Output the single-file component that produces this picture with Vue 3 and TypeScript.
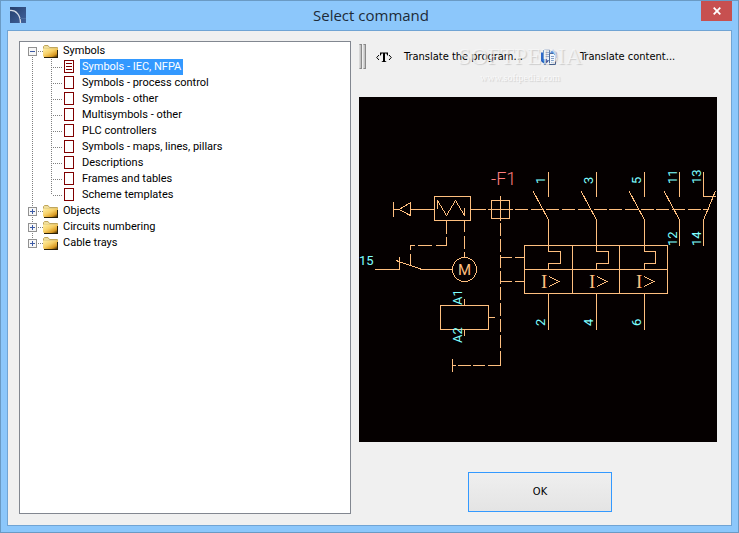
<script setup lang="ts">
import { ref } from 'vue'

interface TreeGroup {
  label: string
  open: boolean
  children: string[]
}

const groups = ref<TreeGroup[]>([
  {
    label: 'Symbols',
    open: true,
    children: [
      'Symbols - IEC, NFPA',
      'Symbols - process control',
      'Symbols - other',
      'Multisymbols - other',
      'PLC controllers',
      'Symbols - maps, lines, pillars',
      'Descriptions',
      'Frames and tables',
      'Scheme templates',
    ],
  },
  { label: 'Objects', open: false, children: [] },
  { label: 'Circuits numbering', open: false, children: [] },
  { label: 'Cable trays', open: false, children: [] },
])

const selected = ref('Symbols - IEC, NFPA')

interface Pole {
  x: number
  inner: number
  top: string
  bottom: string
}

const poles: Pole[] = [
  { x: 548, inner: 560, top: '1', bottom: '2' },
  { x: 596, inner: 608, top: '3', bottom: '4' },
  { x: 644, inner: 655, top: '5', bottom: '6' },
]

interface Tag {
  x: number
  y: number
  text: string
}

const tags: Tag[] = [
  ...poles.map((p) => ({ x: p.x - 3, y: 184, text: p.top })),
  ...poles.map((p) => ({ x: p.x - 3, y: 326, text: p.bottom })),
  { x: 677, y: 184, text: '11' },
  { x: 701, y: 184, text: '13' },
  { x: 677, y: 246, text: '12' },
  { x: 701, y: 246, text: '14' },
  { x: 462, y: 305, text: 'A1' },
  { x: 462, y: 343, text: 'A2' },
]
</script>

<template>
  <div class="window">
    <header class="titlebar">
      <svg class="app-icon" width="16" height="16" viewBox="0 0 16 16" aria-hidden="true">
        <defs>
          <linearGradient id="appbg" x1="0" y1="0" x2="1" y2="1">
            <stop offset="0" stop-color="#253f6c" />
            <stop offset="1" stop-color="#42639c" />
          </linearGradient>
        </defs>
        <rect width="16" height="16" fill="url(#appbg)" />
        <path d="M0 3.500C6 3 10.500 8 10.500 16" fill="none" stroke="#d5dce6" stroke-width="1.300" />
        <path d="M10 11.500h6" stroke="#4f6f9f" stroke-width="1" />
      </svg>
      <h1 class="title">Select command</h1>
      <button class="close" type="button" aria-label="Close">
        <svg width="8" height="8" viewBox="0 0 8 8" aria-hidden="true">
          <path d="M0.700 0.700L7.300 7.300M7.300 0.700L0.700 7.300" stroke="#fff" stroke-width="1.800" />
        </svg>
      </button>
    </header>

    <main class="client">
      <ul class="tree" role="tree">
        <li v-for="(group, g) in groups" :key="group.label" role="none">
          <button
            class="row root"
            type="button"
            role="treeitem"
            :aria-expanded="group.open"
            @click="group.open = !group.open"
          >
            <svg width="15" height="16" viewBox="0 0 15 16" shape-rendering="crispEdges" aria-hidden="true">
              <path v-if="g > 0" class="dots" d="M4.500 0V4" />
              <path v-if="g < groups.length - 1" class="dots" d="M4.500 14V16" />
              <path class="dots" d="M10 8.500H15" />
              <rect x="0.500" y="4.500" width="8" height="8" fill="#f7f7f7" stroke="#919191" />
              <path d="M2 8.500H7" stroke="#3c5aa5" />
              <path v-if="!group.open" d="M4.500 6V11" stroke="#3c5aa5" />
            </svg>
            <svg class="folder" width="16" height="16" viewBox="0 0 16 16" aria-hidden="true">
              <defs>
                <linearGradient :id="`folder${g}`" x1="0" y1="0" x2="1" y2="1">
                  <stop offset="0" stop-color="#fff0a8" />
                  <stop offset="0.450" stop-color="#f6cf66" />
                  <stop offset="0.750" stop-color="#d99a22" />
                  <stop offset="1" stop-color="#2e1c00" />
                </linearGradient>
              </defs>
              <path d="M0.500 5V3.500L1.500 2.500H5L6.500 4.500H14.500V6H0.500Z" fill="#efdd9b" stroke="#c0a65c" />
              <path d="M0 5.500H15V14H1L0 13Z" :fill="`url(#folder${g})`" />
              <path d="M1 14.500H15M14.500 14V7" fill="none" stroke="#2b2109" />
            </svg>
            <span class="text">{{ group.label }}</span>
          </button>
          <ul v-if="group.open" class="children" role="group">
            <li v-for="(child, i) in group.children" :key="child" role="none">
              <button
                class="row leaf"
                type="button"
                role="treeitem"
                :aria-selected="child === selected"
                @click="selected = child"
              >
                <svg width="34" height="16" viewBox="0 0 34 16" shape-rendering="crispEdges" aria-hidden="true">
                  <path class="dots" d="M4.500 0V16" />
                  <path class="dots" :d="i === group.children.length - 1 ? 'M23.500 0V8' : 'M23.500 0V16'" />
                  <path class="dots" d="M25 8.500H34" />
                </svg>
                <svg class="page" width="11" height="16" viewBox="0 0 11 16" shape-rendering="crispEdges" aria-hidden="true">
                  <rect x="0.500" y="1.500" width="9" height="12" fill="#fff" stroke="#7f0000" />
                  <path v-if="child === selected" d="M2 4.500H8M2 7.500H8M2 10.500H8" stroke="#7f0000" />
                </svg>
                <span class="text" :class="{ selected: child === selected }">{{ child }}</span>
              </button>
            </li>
          </ul>
        </li>
      </ul>

      <section class="side">
        <div class="toolbar" role="toolbar">
          <span class="grip"><i></i><i></i></span>
          <button class="tool" type="button">
            <svg width="16" height="16" viewBox="0 0 16 16" aria-hidden="true">
              <path d="M3 6L0.700 8.500L3 11M13 6L15.300 8.500L13 11" fill="none" stroke="#000" />
              <path d="M4 3.500H12V6.500H11.300L10.400 4.600H9V11.900L10.300 12.500V13H5.700V12.500L7 11.900V4.600H5.600L4.700 6.500H4Z" />
            </svg>
            <span>Translate the program...</span>
          </button>
          <button class="tool" type="button">
            <svg width="16" height="16" viewBox="0 0 16 16" aria-hidden="true">
              <path d="M3.500 0.500H8.500V11.500H2.500V1.500Z" fill="#edf3fb" stroke="#6d87b0" />
              <path d="M4 3.500H8M4 5.500H8M4 7.500H8" stroke="#9db3d3" />
              <path d="M0 3.500H2V10H6V12L4 15.500L0 12Z" fill="#2f68c8" />
              <path d="M0.500 12H7.500L4 16Z" fill="#2455ad" />
              <path d="M8.500 4.500H12.500L14.500 6.500V15.500H8.500Z" fill="#f2f6fc" stroke="#4e6a98" />
              <path d="M10 7.500H13M10 9.500H13M10 11.500H13M10 13.500H13" stroke="#849fc6" />
              <path d="M9 4L12 0.500L16 4V9H14V5H12V4Z" fill="#5a8fe2" />
            </svg>
            <span>Translate content...</span>
          </button>
          <div class="watermark">
            <div class="brand">SOFTPEDIA<sup>™</sup></div>
            <div class="site">www.softpedia.com</div>
          </div>
        </div>

        <div class="preview">
          <svg class="drawing" viewBox="359 97 358 345" role="img" aria-label="Symbol preview">
            <g class="pen">
              <!-- actuator and zigzag unit -->
              <path d="M393.500 202V217M394 209.500H399M410.500 202V216M399 209.500L410.500 202.500M399 209.500L410.500 215.500M410 209.500H434" />
              <rect x="434.500" y="196.500" width="36" height="24" />
              <path d="M437.500 209V200.500L446.500 215.500L455.500 200.500L464.500 215.500V208" />
              <!-- mechanical link -->
              <path d="M471 209.500H486M488 209.500H513" />
              <path d="M515 209.500H709" stroke-dasharray="13 2.700" />
              <rect x="491.500" y="200.500" width="18" height="18" />
              <path d="M500.500 196V221" />
              <path d="M500.500 223V365" stroke-dasharray="13 3" />
              <path d="M500.500 360V365.500H488M485 365.500H473M471 365.500H458M456 365.500H453" />
              <path d="M452.500 359V372" />
              <path d="M501 257.500H512M515 257.500H524M501 281.500H512M515 281.500H524" />
              <!-- auxiliary switch -->
              <path d="M375 269.500H399.500V257M396 260.500L422 269.500H452" />
              <path d="M446.500 221V234M446.500 237V245.500H436M432 245.500H418M415 245.500H410.500V250M410.500 254V265" />
              <path d="M464.500 221V232M464.500 236V249M464.500 252V257" />
              <circle cx="464.500" cy="269.500" r="12" />
              <!-- coil -->
              <rect x="440.500" y="305.500" width="48" height="24" />
              <path d="M464.500 299V305M464.500 330V336M489 317.500H495" />
              <!-- release block -->
              <rect x="524.500" y="245.500" width="143" height="48" />
              <path d="M524 269.500H667M572.500 245V293M619.500 245V293" />
              <g v-for="pole in poles" :key="pole.x">
                <path :d="`M${pole.x + 0.5} 172V197M${pole.x - 15} 191L${pole.x + 0.5} 220V251.500H${pole.inner + 0.5}V263.500H${pole.x + 0.5}V269M${pole.x + 0.5} 293V330`" />
                <path :d="`M${pole.inner - 11} 276.500l10 5l-10 5`" />
              </g>
              <!-- auxiliary contacts -->
              <path d="M679.500 172V197M664 191L679.500 220V246" />
              <path d="M703.500 172V196.500H716M715.500 191L703.500 220V246" />
            </g>
            <text v-for="pole in poles" :key="`i${pole.x}`" class="release" :x="pole.inner - 19" y="288">I</text>
            <text class="motor" x="464.500" y="275" text-anchor="middle">M</text>
            <text class="name" x="491" y="185">-F1</text>
            <text class="tag" x="359" y="265">15</text>
            <text
              v-for="tag in tags"
              :key="tag.text"
              class="tag"
              :transform="`translate(${tag.x} ${tag.y}) rotate(-90)`"
            >{{ tag.text }}</text>
          </svg>
        </div>

        <div class="actions">
          <button class="ok" type="button">OK</button>
        </div>
      </section>
    </main>
  </div>
</template>

<style>
body {
  margin: 0;
}
</style>

<style scoped>
.window {
  box-sizing: border-box;
  min-height: 100vh;
  display: flex;
  flex-direction: column;
  padding: 0 6px 6px;
  border: 1px solid #6a9ac4;
  background: #8cc7fb;
  color: #000;
  font-family: "DejaVu Sans Condensed", "Noto Sans", sans-serif;
  font-size: 11px;
  line-height: 16px;
}

button {
  margin: 0;
  padding: 0;
  border: 0;
  background: none;
  color: inherit;
  font: inherit;
}

svg {
  display: block;
  flex: none;
}

.titlebar {
  display: grid;
  grid-template-columns: 31px 1fr 31px;
  height: 29px;
  padding-left: 3px;
}

.app-icon {
  margin-top: 6px;
}

.title {
  margin: 0;
  text-align: center;
  font: 400 15px/29px "Open Sans", "Noto Sans", sans-serif;
  color: #1d2b38;
}

.close {
  display: flex;
  align-items: center;
  justify-content: center;
  height: 20px;
  background: #c75050;
}

.client {
  flex: 1;
  display: grid;
  grid-template-columns: minmax(0, 332fr) minmax(0, 358fr);
  column-gap: 8px;
  padding: 10px 14px 11px 11px;
  border: 1px solid #70a4d4;
  background: #f0f0f0;
}

.tree,
.children {
  margin: 0;
  padding: 0;
  list-style: none;
}

.tree {
  padding: 1px 8px;
  border: 1px solid #828790;
  background: #fff;
  font-family: Roboto, "Noto Sans", sans-serif;
}

.row {
  display: flex;
  align-items: center;
  height: 16px;
  white-space: nowrap;
}

.dots {
  stroke: #808080;
  stroke-dasharray: 1 1;
}

.folder {
  margin-right: 2px;
}

.page {
  margin: 0 5px 0 2px;
}

.text {
  padding: 0 2px;
}

.selected {
  background: #3399ff;
  color: #fff;
}

.side {
  display: flex;
  flex-direction: column;
}

.toolbar {
  position: relative;
  display: flex;
  align-items: flex-start;
  box-sizing: border-box;
  height: 56px;
  padding-top: 3px;
}

.grip {
  display: flex;
  gap: 1px;
  margin-right: 10px;
}

.grip i {
  box-sizing: border-box;
  width: 3px;
  height: 25px;
  border: 1px solid #8a8a8a;
  border-left-color: #d8d8d8;
  background: #c4c4c4;
}

.tool {
  display: flex;
  align-items: center;
  gap: 12px;
  height: 26px;
  margin-right: 18px;
  white-space: nowrap;
}

.tool + .tool {
  gap: 23px;
}

.watermark {
  position: absolute;
  top: 3px;
  left: 98px;
  width: 134px;
  text-align: center;
  pointer-events: none;
  color: rgba(250, 250, 250, 0.7);
  text-shadow: 1px 1px 1px rgba(0, 0, 0, 0.15);
}

.brand {
  font: 23px/26px "Liberation Serif", serif;
  white-space: nowrap;
}

.brand sup {
  font-size: 8px;
  line-height: 8px;
}

.site {
  padding-right: 8px;
  font: 10px/16px "Liberation Serif", serif;
  color: #fafafa;
}

.preview {
  flex: 1;
  background: #050000;
}

.drawing {
  width: 100%;
  height: auto;
}

.pen {
  fill: none;
  stroke: #ffbf7f;
  stroke-width: 1;
  shape-rendering: crispEdges;
}

.release {
  font: 19px "Liberation Serif", serif;
  fill: #ffbf7f;
}

.motor {
  font: 400 15px Roboto, sans-serif;
  fill: #ffbf7f;
}

.name {
  font: 300 18px Roboto, sans-serif;
  fill: #ff7f7f;
}

.tag {
  font: 400 13px Roboto, sans-serif;
  fill: #7fffff;
}

.actions {
  display: flex;
  justify-content: center;
  padding: 30px 0 2px 4px;
}

.ok {
  box-sizing: border-box;
  width: 144px;
  height: 40px;
  border: 1px solid #3399ff;
  background: linear-gradient(#efefef, #e4e4e4);
}
</style>
